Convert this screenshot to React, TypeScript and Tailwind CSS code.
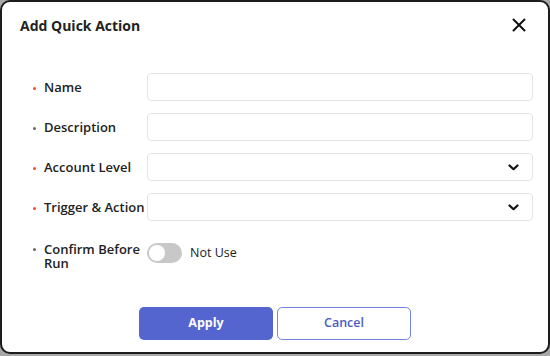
import React from "react";

const Bullet = ({ red }: { red?: boolean }) => (
  <span className={`inline-block w-[3px] h-[3px] rounded-full mr-[8px] shrink-0 ${red ? "bg-[#f04a3a]" : "bg-[#666666]"}`} />
);

const Chevron = () => (
  <svg width="11" height="7" viewBox="0 0 11 7" fill="none">
    <path d="M1.5 1.5 L5.5 5.2 L9.5 1.5" stroke="#111" strokeWidth="2.2" strokeLinecap="round" strokeLinejoin="round" />
  </svg>
);

const Row = ({ label, red, select }: { label: string; red?: boolean; select?: boolean }) => (
  <div className="flex items-center h-[28px]">
    <div className="w-[114px] flex items-center text-[13px] font-semibold text-[#222] pt-[2px]">
      <Bullet red={red} />
      <span>{label}</span>
    </div>
    <div className="w-[386px] h-[28px] border border-[#e4e4e4] rounded-[4px] bg-white flex items-center justify-end pr-[13px]">
      {select && <Chevron />}
    </div>
  </div>
);

export default function App() {
  return (
    <div className="w-[550px] h-[356px] bg-[#a8a8a8]" style={{ fontFamily: '"Open Sans", "Noto Sans", sans-serif' }}>
      <div className="w-[550px] h-[354px] bg-white border-2 border-[#1c1c1c] rounded-[10px] flex flex-col">
        <div className="h-[46px] flex items-center justify-between pl-[18px] pr-[22px]">
          <span className="text-[14px] font-bold text-[#222]">Add Quick Action</span>
          <svg width="14" height="14" viewBox="0 0 14 14">
            <path d="M1.5 1.5 L12.5 12.5 M12.5 1.5 L1.5 12.5" stroke="#111" strokeWidth="2" strokeLinecap="round" />
          </svg>
        </div>
        <div className="mt-[25px] pl-[31px] flex flex-col gap-[12px]">
          <Row label="Name" red />
          <Row label="Description" />
          <Row label="Account Level" red select />
          <Row label="Trigger & Action" red select />
        </div>
        <div className="mt-[20px] pl-[31px] flex items-start">
          <div className="w-[114px] flex items-start text-[13px] font-semibold text-[#222] leading-[14px] pt-[1px]">
            <span className="mt-[6px] flex"><Bullet /></span>
            <div className="flex flex-col">
              <span>Confirm Before</span>
              <span>Run</span>
            </div>
          </div>
          <div className="mt-[2px] flex items-center">
            <div className="w-[35px] h-[20px] rounded-full bg-[#c8c8c8] flex items-center pl-[2px]">
              <div className="w-[16px] h-[16px] rounded-full bg-white" />
            </div>
            <span className="ml-[8px] text-[12.5px] text-[#222] pt-[1px]">Not Use</span>
          </div>
        </div>
        <div className="mt-[37px] flex justify-center gap-[4px]">
          <button className="w-[134px] h-[33px] rounded-[5px] bg-[#5465cf] text-white text-[12.5px] font-bold">Apply</button>
          <button className="w-[134px] h-[33px] rounded-[5px] bg-white border-[1.5px] border-[#7584e2] text-[#4c5cc2] text-[12.5px] font-semibold">Cancel</button>
        </div>
      </div>
    </div>
  );
}
